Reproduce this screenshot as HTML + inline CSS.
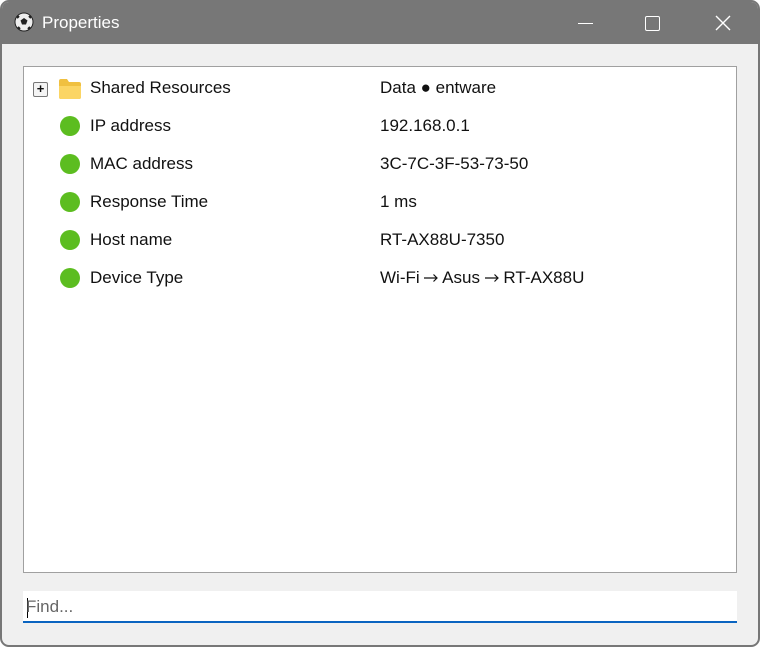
<!DOCTYPE html>
<html><head><style>
html,body{margin:0;padding:0;background:transparent}
body{width:760px;height:647px;position:relative;overflow:hidden;font-family:"Liberation Sans","DejaVu Sans",sans-serif}
.win{position:absolute;left:0;top:0;width:756px;height:643px;border:2px solid #777;border-radius:9px;background:#f0f0f0;overflow:hidden}
.title{position:absolute;left:0;top:0;width:756px;height:42px;background:#777;color:#fff;font-size:17px}
.title .t{position:absolute;left:40px;top:11px}
.list{position:absolute;left:21px;top:64px;width:712px;height:505px;background:#fff;border:1px solid #a0a0a0}
.row{position:absolute;left:0;height:38px;width:700px;font-size:17px;color:#111}
.row .k{position:absolute;left:66px;top:9px}
.row .v{position:absolute;left:356px;top:9px;white-space:pre}
.ar{display:inline-block;width:14px;height:10px;position:relative}
.dot{position:absolute;left:36px;top:9px;width:20px;height:20px;border-radius:50%;background:#5cbd20}
.find{position:absolute;left:21px;top:589px;width:714px;height:30px;background:#fff;border-bottom:2px solid #0a64c0;font-size:17px;color:#666}
</style></head><body>
<div class="win">
<div class="title">
<svg style="position:absolute;left:12px;top:10px" width="20" height="20" viewBox="0 0 20 20"><circle cx="10" cy="10" r="9" fill="#eee" stroke="#222"/><polygon points="10,6 13.5,8.5 12,12.5 8,12.5 6.5,8.5" fill="#222"/><path d="M3,6 L5,4 M17,6 L15,4 M4,15 L6,17 M16,15 L14,17" stroke="#222" stroke-width="2"/></svg>
<span class="t">Properties</span>
<div style="position:absolute;left:576px;top:21px;width:15px;height:1px;background:#fff"></div>
<div style="position:absolute;left:643px;top:14px;width:13px;height:13px;border:1.3px solid #fff;border-radius:2px"></div>
<svg style="position:absolute;left:713px;top:13px" width="16" height="16"><path d="M1,1L15,15M15,1L1,15" stroke="#fff" stroke-width="1.4"/></svg>
</div>
<div class="list">
<div class="row" style="top:2px">
<div style="position:absolute;left:9px;top:13px;width:13px;height:13px;border:1px solid #777;border-radius:2px;background:#f4f4f4;font-size:13px;line-height:12px;text-align:center;font-weight:bold">+</div>
<svg style="position:absolute;left:34px;top:9px" width="24" height="22" viewBox="0 0 24 22"><path d="M1,3 Q1,1 3,1 L9,1 L11,4 L21,4 Q23,4 23,6 L23,19 Q23,21 21,21 L3,21 Q1,21 1,19Z" fill="#f0c040"/><path d="M1,8 L23,8 L23,19 Q23,21 21,21 L3,21 Q1,21 1,19Z" fill="#fbd564"/></svg>
<span class="k">Shared Resources</span><span class="v">Data ● entware</span></div>
<div class="row" style="top:40px"><div class="dot"></div><span class="k">IP address</span><span class="v">192.168.0.1</span></div>
<div class="row" style="top:78px"><div class="dot"></div><span class="k">MAC address</span><span class="v">3C-7C-3F-53-73-50</span></div>
<div class="row" style="top:116px"><div class="dot"></div><span class="k">Response Time</span><span class="v">1 ms</span></div>
<div class="row" style="top:154px"><div class="dot"></div><span class="k">Host name</span><span class="v">RT-AX88U-7350</span></div>
<div class="row" style="top:192px"><div class="dot"></div><span class="k">Device Type</span><span class="v">Wi-Fi <svg class="ar" viewBox="0 0 14 10"><path d="M0,5H13M9.5,1.5L13,5L9.5,8.5" stroke="#111" stroke-width="1.2" fill="none"/></svg> Asus <svg class="ar" viewBox="0 0 14 10"><path d="M0,5H13M9.5,1.5L13,5L9.5,8.5" stroke="#111" stroke-width="1.2" fill="none"/></svg> RT-AX88U</span></div>
</div>
<div class="find"><div style="position:absolute;left:4px;top:7px;width:1px;height:20px;background:#000"></div><span style="position:absolute;left:3px;top:6px">Find...</span></div>
</div>
</body></html>
